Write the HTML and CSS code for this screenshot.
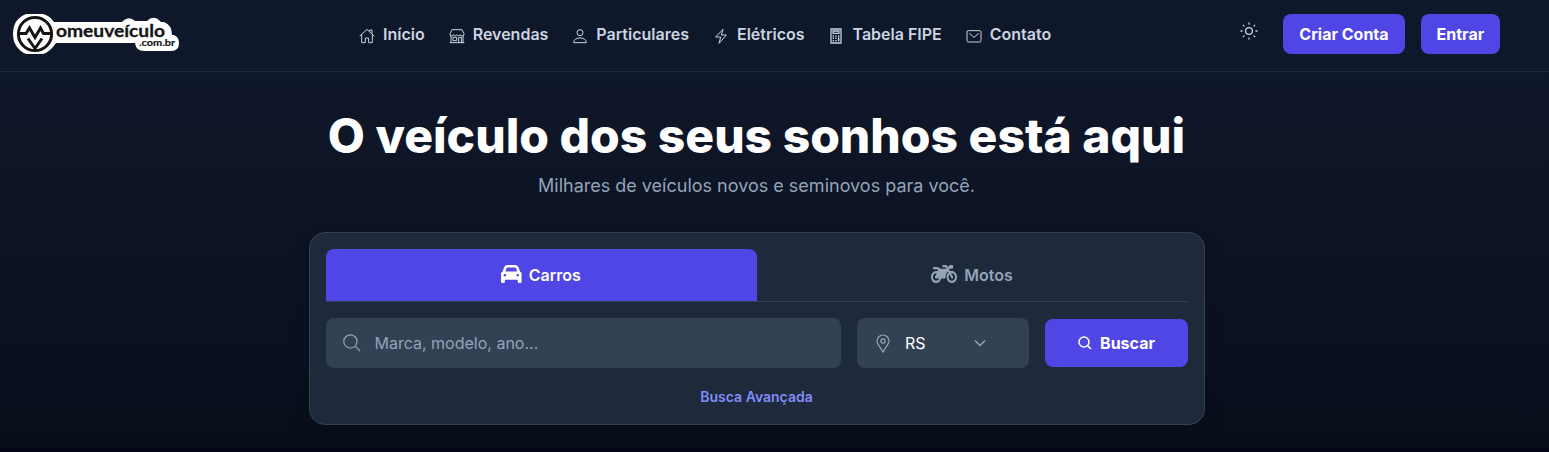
FILE: index.html
```html
<!DOCTYPE html>
<html lang="pt-BR">
<head>
<meta charset="utf-8">
<title>O meu veículo</title>
<link rel="stylesheet" href="styles.css">
</head>
<body>
<header class="header">
  <a class="logo">
    <svg width="168" height="42" viewBox="0 0 168 42">
      <path class="logo-plate" d="M14 1H31Q37 2 42 9H110Q117 2 123 8H135Q142 1 149 9H152Q160 12 160 22H162Q167 24 167 30Q167 38 159 38H132Q124 38 123 30H44Q38 39 31 41H14Q1 35 1 21Q1 6 14 1Z"/>
      <g class="logo-mark">
        <circle cx="23" cy="21" r="16.6"/>
        <path d="M6 20.500H14L17.500 15L23 24.500L28.500 15L31.500 20.500H40M16 25.500L23 35.500L30 25.500"/>
      </g>
      <text class="logo-name" x="44" y="23.5" textLength="109" lengthAdjust="spacingAndGlyphs">omeuveículo</text>
      <text class="logo-domain" x="127" y="32.5" textLength="36" lengthAdjust="spacingAndGlyphs">.com.br</text>
    </svg>
  </a>
  <nav class="nav">
    <a class="nav-link"><svg class="nav-icon" viewBox="0 0 24 24"><path d="M1 12.500L12 2L23 12.500M4 10V22H9.500V15H14.500V22H20V10M16 5.500V3H19.500V8.500"/></svg>Início</a>
    <a class="nav-link"><svg class="nav-icon" viewBox="0 0 24 24"><path d="M4.500 2.500H19.500L22.500 8.500A2.700 2.700 0 0 1 17 10A2.700 2.700 0 0 1 12 10A2.700 2.700 0 0 1 7 10A2.700 2.700 0 0 1 1.500 8.500ZM3 11V22M21 11V22M1 22H23M14.500 22V14H18.500V22M6 14H11.500V19H6Z"/></svg>Revendas</a>
    <a class="nav-link"><svg class="nav-icon" viewBox="0 0 24 24"><circle cx="12" cy="7" r="4.500"/><path d="M2.500 22C2.500 12.500 21.500 12.500 21.500 22Z"/></svg>Particulares</a>
    <a class="nav-link"><svg class="nav-icon" viewBox="0 0 24 24"><path d="M15 2L4 13.500H11.500L9 23L20 10.500H12.500Z"/></svg>Elétricos</a>
    <a class="nav-link"><svg class="nav-icon calculator" viewBox="0 0 24 24"><path d="M4.500 1.500H19.500V22.500H4.500ZM7.500 4.500H16.500V8H7.500Z"/><path class="keys" d="M7 12H9M11 12H13M15 12H17M7 15.500H9M11 15.500H13M15 15.500H17M7 19H9M11 19H13M16 14V20"/></svg>Tabela FIPE</a>
    <a class="nav-link"><svg class="nav-icon" viewBox="0 0 24 24"><rect x="1.500" y="4" width="21" height="17" rx="2"/><path d="M5 8L12 14L19 8"/></svg>Contato</a>
  </nav>
  <div class="actions">
    <svg class="sun" viewBox="0 0 18 18"><circle cx="9" cy="9" r="3.400"/><path d="M9 .5V2.500M9 15.500V17.500M.5 9H2.500M15.500 9H17.500M3 3L4.400 4.400M13.600 13.600L15 15M3 15L4.400 13.600M13.600 4.400L15 3"/></svg>
    <a class="button">Criar Conta</a>
    <a class="button">Entrar</a>
  </div>
</header>
<main class="hero">
  <h1 class="title">O veículo dos seus sonhos está aqui</h1>
  <p class="subtitle">Milhares de veículos novos e seminovos para você.</p>
  <section class="card">
    <div class="tabs">
      <div class="tab tab-active"><svg class="car" viewBox="0 32 512 448"><path d="M135.2 117.400L109.100 192H402.900l-26.100-74.600C372.300 104.600 360.200 96 346.600 96H165.400c-13.600 0-25.700 8.600-30.200 21.400zM39.600 196.800L74.800 96.300C88.300 57.800 124.600 32 165.400 32H346.600c40.800 0 77.100 25.800 90.600 64.300l35.200 100.500c23.200 9.600 39.600 32.500 39.600 59.200V448c0 17.700-14.300 32-32 32H448c-17.700 0-32-14.300-32-32V400H96v48c0 17.700-14.300 32-32 32H32c-17.700 0-32-14.300-32-32V256c0-26.700 16.400-49.600 39.600-59.200zM128 288a32 32 0 1 0-64 0 32 32 0 1 0 64 0zm288 32a32 32 0 1 0 0-64 32 32 0 1 0 0 64z"/></svg>Carros</div>
      <div class="tab"><svg class="moto" viewBox="0 64 640 384" preserveAspectRatio="none"><path d="M512.900 192c-14.900-.1-29.100 2.300-42.400 6.900L437.600 144H520c13.300 0 24-10.700 24-24V88c0-13.300-10.700-24-24-24h-45.300c-6.800 0-13.300 2.900-17.800 7.900l-37.500 41.700-22.800-38C392.200 68.400 384.400 64 376 64h-80c-8.800 0-16 7.200-16 16v16c0 8.800 7.200 16 16 16h66.400l19.200 32H227.900c-17.700-23.100-44.900-40-99.900-40H72.500C59 104 47.700 115 48 128.500c.2 13 10.900 23.500 24 23.500h56c24.500 0 38.700 10.900 47.800 24.800l-11.300 20.500c-13-3.900-26.900-5.700-41.300-5.200C55.900 194.500 1.600 249.600 0 317c-1.600 72.100 56.300 131 128 131 59.600 0 109.700-40.800 124-96h84.200c13.700 0 24.600-11.400 24-25.100-2.100-47.100 17.500-93.700 56.200-125l12.500 20.800c-27.600 23.700-45.100 58.900-44.800 98.200.5 69.600 57.200 126.500 126.800 127.100 71.600.7 129.800-57.500 129.200-129.100-.7-69.600-57.600-126.400-127.200-126.900zM128 400c-44.100 0-80-35.900-80-80s35.900-80 80-80c4.200 0 8.400.3 12.500 1L99 316.400c-8.800 16 2.800 35.600 21 35.600h81.300c-12.400 28.200-40.600 48-73.300 48zm463.900-75.600c-2.200 40.600-35 73.400-75.500 75.500-46.100 2.500-84.400-34.300-84.400-79.900 0-21.400 8.400-40.800 22.100-55.100l49.400 82.400c4.500 7.600 14.400 10 22 5.500l13.700-8.200c7.600-4.500 10-14.400 5.500-22l-48.600-80.900c5.200-1.100 10.500-1.600 15.900-1.600 45.600-.1 82.300 38.200 79.900 84.300z"/></svg>Motos</div>
    </div>
    <div class="search-row">
      <div class="field"><svg class="search" viewBox="0 0 18 18"><circle cx="7.400" cy="7.400" r="6.600"/><path d="M12.200 12.200L17 17"/></svg><span class="placeholder">Marca, modelo, ano...</span></div>
      <div class="field state"><svg class="pin" viewBox="0 0 14 19"><path d="M7 18C5 14 1 10 1 7A6 6 0 0 1 13 7C13 10 9 14 7 18Z"/><circle cx="7" cy="7" r="2.100"/></svg><span class="state-name">RS</span><svg class="chevron" viewBox="0 0 12 8"><path d="M1 1.500L6 6.500L11 1.500"/></svg></div>
      <a class="submit"><svg class="submit-icon" viewBox="0 0 14 14"><circle cx="6" cy="6" r="5"/><path d="M9.600 9.600L13 13"/></svg>Buscar</a>
    </div>
    <a class="advanced">Busca Avançada</a>
  </section>
</main>
<div class="page-end"></div>
</body>
</html>
```
FILE: styles.css
```css
* { box-sizing: border-box; }
body {
  margin: 0;
  height: 452px;
  overflow: hidden;
  display: flex;
  flex-direction: column;
  background: #020617;
  color: #fff;
  font: 16px/24px Inter, "Liberation Sans", sans-serif;
}
svg { display: block; flex: none; fill: none; stroke: currentColor; }
.header {
  height: 72px;
  flex: none;
  display: grid;
  grid-template-columns: 359px 1fr auto;
  padding: 0 48.8px 3px 0;
  align-items: center;
  background: #0f172a;
  border-bottom: 1px solid #1e293b;
}
.logo { padding-left: 12px; }
.logo-plate { fill: #fff; stroke: none; }
.logo-mark { stroke: #151515; stroke-width: 3; }
.logo-name, .logo-domain { fill: #151515; stroke: none; font-family: Lato, sans-serif; font-weight: 700; line-height: 1; }
.logo-name { font-size: 17.5px; stroke: #151515; stroke-width: .3; }
.logo-domain { font-size: 9.5px; stroke: #151515; stroke-width: .2; }
.nav { display: flex; gap: 24px; color: #cbd5e1; font-weight: 600; }
.nav-link { display: flex; align-items: center; gap: 8px; white-space: nowrap; }
.nav-icon { width: 16px; height: 16px; margin-top: 3px; stroke-width: 1.5; }
.calculator { stroke-width: 1.9; }
.keys { stroke-width: 2.3; }
.actions { display: flex; align-items: center; gap: 16px; }
.sun { width: 18px; height: 18px; margin: 0 9px 6px 0; color: #cbd5e1; stroke-width: 1.3; }
.button { height: 40px; padding: 8px 16px; border-radius: 8px; background: #4f46e5; font-weight: 700; white-space: nowrap; }
.hero {
  height: 376px;
  flex: none;
  display: flex;
  flex-direction: column;
  align-items: center;
  padding: 40px 35px 0 0;
  background: linear-gradient(#0f172a, #090e1b);
}
.title { margin: 0 1px 0 0; font-size: 48px; line-height: 48px; font-weight: 800; white-space: nowrap; }
.subtitle { margin: 12px 1px 32px 0; font-size: 18px; line-height: 28px; color: #94a3b8; }
.card {
  width: 896px;
  height: 193px;
  padding: 16px;
  display: flex;
  flex-direction: column;
  background: #1e293b;
  border: 1px solid #334155;
  border-radius: 16px;
  box-shadow: 0 8px 20px rgba(0, 0, 0, .12);
}
.tabs { display: flex; height: 53px; border-bottom: 1px solid #334155; }
.tab { flex: 1; display: flex; align-items: center; justify-content: center; gap: 7px; padding-right: 1px; color: #94a3b8; font-weight: 600; }
.tab-active { color: #fff; background: #4f46e5; border-radius: 8px 8px 0 0; }
.car, .moto { fill: currentColor; stroke: none; margin-bottom: 2px; }
.car { width: 20.6px; height: 18px; }
.moto { width: 26px; height: 18px; }
.search-row { display: grid; grid-template-columns: 515px 172px 143px; gap: 16px; margin-top: 16px; align-items: center; }
.field { height: 50px; display: flex; align-items: center; padding-left: 17px; border-radius: 8px; background: #334155; color: #94a3b8; }
.search { width: 18px; height: 18px; margin-right: 13.5px; stroke-width: 1.2; }
.state { padding-left: 19px; }
.pin { width: 14px; height: 19px; margin-right: 15px; stroke-width: 1.2; }
.state-name { width: 69px; color: #fff; }
.chevron { width: 12px; height: 8px; stroke-width: 1.5; }
.submit { height: 48px; display: flex; align-items: center; justify-content: center; gap: 8px; border-radius: 8px; background: #4f46e5; font-weight: 700; }
.submit-icon { width: 14px; height: 14px; stroke-width: 1.5; }
.advanced { margin: 19px 1px 0 0; align-self: center; color: #818cf8; font-size: 14px; line-height: 20px; font-weight: 600; }
.page-end { flex: 1; }
```
